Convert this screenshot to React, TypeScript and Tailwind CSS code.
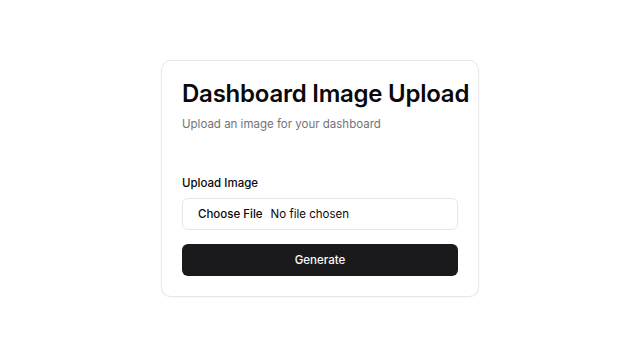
const App = () => {
  return (
    <main className="flex min-h-screen items-center justify-center bg-white font-['Inter',sans-serif] text-[#09090b]">
      <div className="w-[318px] rounded-[10px] border border-[#e7e7ea] bg-white p-5 shadow-[0_1px_2px_rgba(0,0,0,0.03)]">
        <h1 className="whitespace-nowrap text-2xl font-semibold leading-[26px] tracking-[-0.01em]">
          Dashboard Image Upload
        </h1>
        <p className="mt-[7px] text-[11.5px] leading-5 text-[#737378]">Upload an image for your dashboard</p>

        <label htmlFor="image" className="mt-[43px] block text-[11.5px] font-medium leading-3">
          Upload Image
        </label>
        <input
          id="image"
          type="file"
          accept="image/*"
          className="mt-[9px] block h-8 w-full rounded-md border border-[#e7e7ea] bg-white px-[15px] py-0 text-[11.5px] leading-[30px] file:mr-2 file:border-0 file:bg-transparent file:px-0 file:text-[11.5px] file:font-medium file:leading-[30px] file:text-[#09090b]"
        />

        <button className="mt-[14px] flex h-8 w-full items-center justify-center rounded-md bg-[#1a1a1c] pt-px text-[11.5px] font-medium text-[#fafafa]">
          Generate
        </button>
      </div>
    </main>
  );
};

export default App;
